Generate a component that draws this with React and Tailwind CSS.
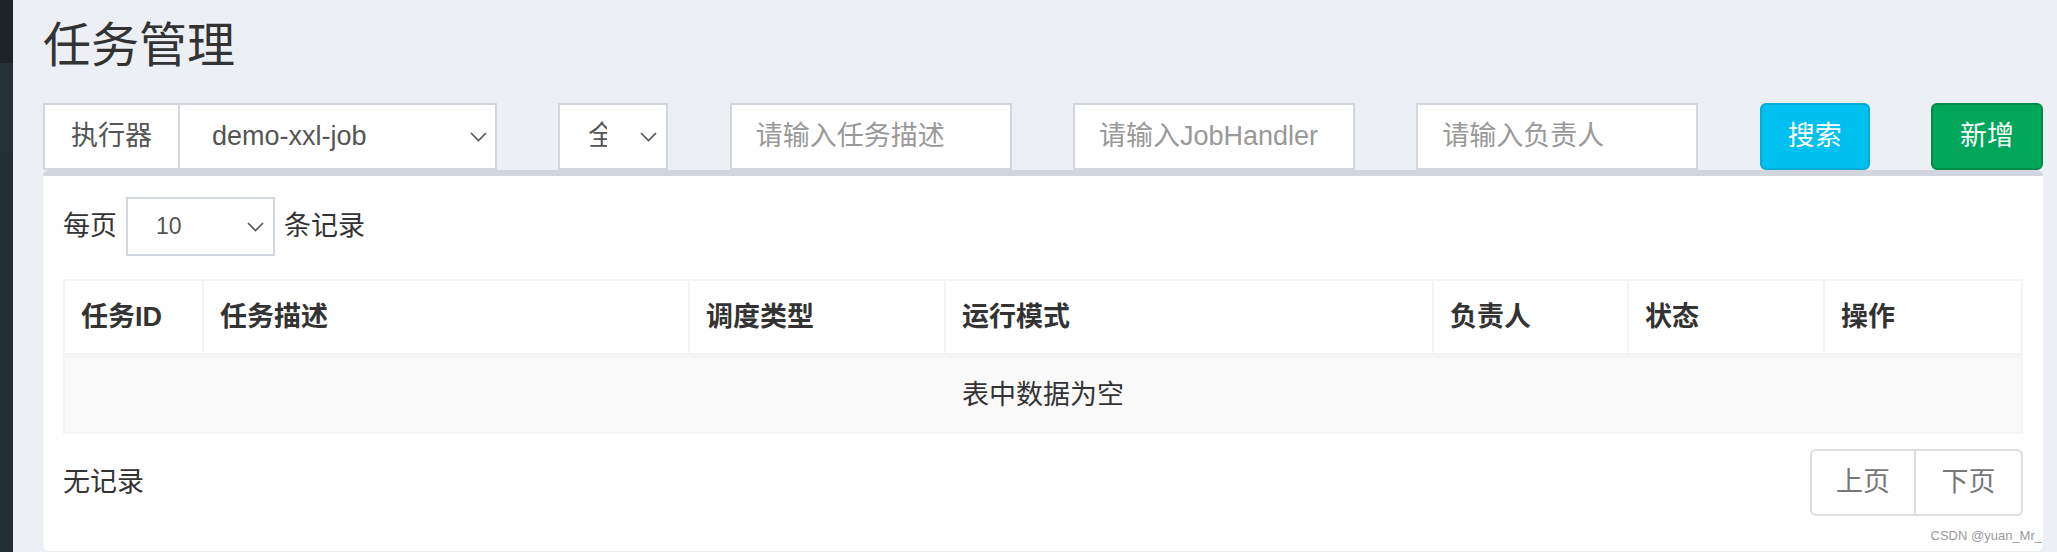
import React from 'react';

const font = { fontFamily: '"Liberation Sans", "Noto Sans CJK SC", sans-serif' };

const Chevron = ({ className = '' }) => (
  <svg className={className} width="17" height="10" viewBox="0 0 17 10" fill="none">
    <polyline points="1,1 8.5,8.5 16,1" stroke="#555" strokeWidth="1.6" />
  </svg>
);

const columns = [
  { label: '任务ID', w: 'w-[139px]' },
  { label: '任务描述', w: 'w-[486px]' },
  { label: '调度类型', w: 'w-[256px]' },
  { label: '运行模式', w: 'w-[488px]' },
  { label: '负责人', w: 'w-[195px]' },
  { label: '状态', w: 'w-[196px]' },
  { label: '操作', w: 'w-[196px]' },
];

const App = () => {
  return (
    <div className="flex w-[2057px] h-[552px] overflow-hidden bg-[#ecf0f5] text-[#333]" style={font}>
      {/* sidebar edge */}
      <div className="flex flex-col w-[13px] shrink-0">
        <div className="h-[63px] bg-[#1c2427]" />
        <div className="h-[89px] bg-[#243035]" />
        <div className="flex-1 bg-[#222d32]" />
      </div>

      <div className="flex-1 pl-[30px] pr-[14px]">
        <div className="h-[103px] pt-[22px]">
          <h1 className="text-[48px] leading-[48px] font-normal text-[#333]">任务管理</h1>
        </div>

        {/* filters */}
        <div className="flex justify-between h-[67px]">
          <div className="flex w-[454px] h-full">
            <div className="flex items-center justify-center w-[135px] bg-white border-2 border-r-0 border-[#d2d6de] text-[27px] text-[#555]">
              执行器
            </div>
            <div className="flex items-center justify-between flex-1 bg-white border-2 border-[#d2d6de] pl-[32px] pr-[8px] text-[27px] text-[#555]">
              <span>demo-xxl-job</span>
              <Chevron />
            </div>
          </div>

          {/* status select: option text is clipped by the arrow area, as in the original */}
          <div className="flex items-center w-[110px] bg-white border-2 border-[#d2d6de] pl-[28px] pr-[9px] text-[27px] text-[#555]">
            <span className="w-[19px] overflow-hidden whitespace-nowrap">全部</span>
            <Chevron className="ml-auto" />
          </div>

          {['请输入任务描述', '请输入JobHandler', '请输入负责人'].map((p) => (
            <input
              key={p}
              placeholder={p}
              className="w-[282px] h-full bg-white border-2 border-[#d2d6de] px-[24px] text-[27px] outline-none placeholder:text-[#999]"
            />
          ))}

          <button className="w-[110px] h-full rounded-[6px] bg-[#00c0ef] border-2 border-[#00acd6] text-white text-[27px]">
            搜索
          </button>
          <button className="w-[112px] h-full rounded-[6px] bg-[#00a65a] border-2 border-[#008d4c] text-white text-[27px]">
            新增
          </button>
        </div>

        {/* box */}
        <div className="relative h-[381px] bg-white border-t-[6px] border-[#d2d6de] rounded-[6px] px-[20px] pt-[21px]">
          <div className="flex items-center h-[59px] text-[27px]">
            <span>每页</span>
            <div className="flex items-center justify-between w-[149px] h-full mx-[9px] border-2 border-[#d2d6de] pl-[28px] pr-[9px] text-[23px] text-[#555]">
              <span>10</span>
              <Chevron />
            </div>
            <span>条记录</span>
          </div>

          <div className="mt-[23px] border-2 border-[#f4f4f4]">
            <div className="flex h-[77px] border-b-[5px] border-[#f4f4f4]">
              {columns.map((c, i) => (
                <div
                  key={c.label}
                  className={`${c.w} flex items-center pl-[16px] text-[27px] font-bold ${i < columns.length - 1 ? 'border-r-2 border-[#f4f4f4]' : ''}`}
                >
                  {c.label}
                </div>
              ))}
            </div>
            <div className="flex items-center justify-center h-[74px] bg-[#f9f9f9] text-[27px]">
              表中数据为空
            </div>
          </div>

          <div className="flex items-center justify-between mt-[15px]">
            <span className="text-[27px]">无记录</span>
            <div className="flex h-[67px] text-[27px] text-[#777]">
              <button className="w-[106px] h-full border-2 border-[#ddd] rounded-l-[6px]">上页</button>
              <button className="w-[107px] h-full border-2 border-l-0 border-[#ddd] rounded-r-[6px]">下页</button>
            </div>
          </div>

          <span className="absolute right-[1px] bottom-[9px] text-[13px] leading-none text-[#9a9a9a]">
            CSDN @yuan_Mr_
          </span>
        </div>
      </div>
    </div>
  );
};

export default App;
